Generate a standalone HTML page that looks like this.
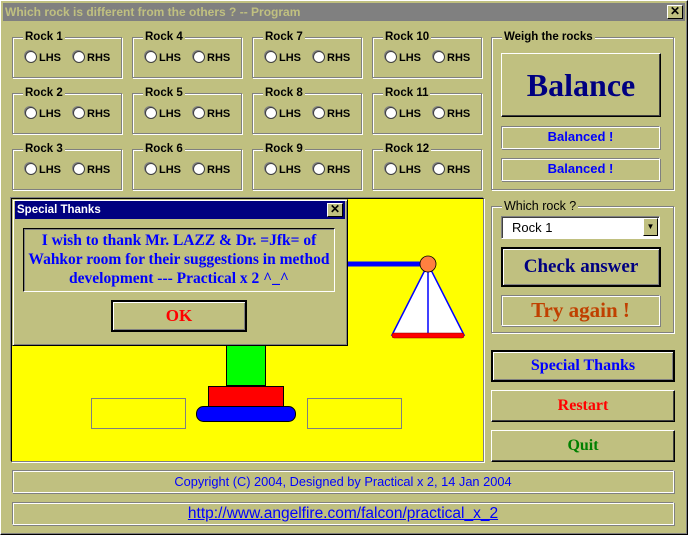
<!DOCTYPE html>
<html><head><style>
*{margin:0;padding:0;box-sizing:border-box}
body{width:688px;height:535px;background:#c0c080;position:relative;overflow:hidden;font-family:"Liberation Sans",sans-serif}
.a{position:absolute}
.win{left:0;top:0;width:688px;height:535px;border:1px solid;border-color:#fff #000 #000 #fff;box-shadow:inset -1px -1px #808080}
.grp{position:absolute;border:1px solid #808080;box-shadow:1px 1px 0 #fff,inset 1px 1px 0 #fff}
.gl{position:absolute;top:-8px;left:10px;background:#c0c080;padding:0 2px;font-size:11.5px;font-weight:bold;color:#000;line-height:14px}
.rad{position:absolute;top:20px;font-size:11px;font-weight:bold;line-height:12px}
.rad i{display:inline-block;width:12px;height:12px;border-radius:50%;background:#fff;border:1px solid #404040;vertical-align:-2px;margin-right:2px;box-shadow:-1px -1px 0 #808080}
.sunk{position:absolute;border:1px solid;border-color:#808080 #fff #fff #808080;box-shadow:inset 1px 1px 0 #fff,1px 1px 0 #808080}
.btn{position:absolute;border:1px solid;border-color:#fff #000 #000 #fff;box-shadow:inset -1px -1px 0 #404040;display:flex;align-items:center;justify-content:center;font-family:"Liberation Serif",serif;font-weight:bold}
.btnd{border:2px solid #000;box-shadow:inset 1px 1px 0 #fff,inset -1px -1px 0 #808080}
.xb{position:absolute;width:16px;height:14px;background:#c0c080;border:1px solid;border-color:#fff #000 #000 #fff;font-size:12px;font-weight:bold;line-height:11px;text-align:center}
</style></head><body>
<div class="a win"></div>
<div class="a" style="left:3px;top:3px;width:682px;height:18px;background:#808080"></div>
<div class="a" style="left:5px;top:4px;font-size:12px;font-weight:bold;color:#c0c080;line-height:16px">Which rock is different from the others ? -- Program</div>
<div class="xb" style="left:667px;top:5px">✕</div>

<div id="rocks"></div>

<div class="grp" style="left:491px;top:37px;width:183px;height:153px"><span class="gl">Weigh the rocks</span></div>
<div class="btn" style="left:501px;top:53px;width:160px;height:64px;color:#000080;font-size:32px">Balance</div>
<div class="sunk" style="left:501px;top:126px;width:159px;height:23px;color:#0000ff;font-size:13px;font-weight:bold;text-align:center;line-height:20px">Balanced !</div>
<div class="sunk" style="left:501px;top:158px;width:159px;height:23px;color:#0000ff;font-size:13px;font-weight:bold;text-align:center;line-height:20px">Balanced !</div>

<div class="grp" style="left:491px;top:206px;width:183px;height:127px"><span class="gl" style="font-weight:normal;font-size:12.5px">Which rock ?</span></div>
<div class="a" style="left:501px;top:216px;width:159px;height:23px;background:#fff;border:1px solid;border-color:#808080 #fff #fff #808080;box-shadow:inset 1px 1px #404040;font-size:13px;line-height:21px;padding-left:10px">Rock 1</div>
<div class="a" style="left:643px;top:218px;width:15px;height:18px;background:#c0c080;border:1px solid;border-color:#fff #000 #000 #fff;font-size:8px;text-align:center;line-height:16px">▼</div>
<div class="btn btnd" style="left:501px;top:247px;width:160px;height:40px;color:#000080;font-size:19px">Check answer</div>
<div class="sunk" style="left:501px;top:295px;width:159px;height:31px;color:#c04000;font-size:21px;font-family:'Liberation Serif',serif;font-weight:bold;text-align:center;line-height:28px">Try again !</div>

<div class="btn btnd" style="left:491px;top:350px;width:184px;height:32px;color:#0000ff;font-size:16px">Special Thanks</div>
<div class="btn" style="left:491px;top:390px;width:184px;height:32px;color:#ff0000;font-size:16px">Restart</div>
<div class="btn" style="left:491px;top:430px;width:184px;height:32px;color:#008000;font-size:16px">Quit</div>

<div class="a" style="left:11px;top:198px;width:473px;height:264px;background:#ff0;border:1px solid;border-color:#000 #808080 #808080 #000;box-shadow:1px 1px 0 #fff,-1px -1px 0 #808080"></div>
<svg class="a" style="left:0;top:0" width="688" height="535">
<line x1="340" y1="264" x2="428" y2="264" stroke="#0000ff" stroke-width="5"/>
<polygon points="428,264 392,335 464,335" fill="#fff" stroke="#0000ff" stroke-width="1.5"/>
<line x1="428" y1="264" x2="428" y2="333" stroke="#0000ff" stroke-width="1.5"/>
<rect x="392" y="333" width="72" height="5" rx="2" fill="#f00" stroke="#800" stroke-width="0.5"/>
<circle cx="428" cy="264" r="8" fill="#ff8040" stroke="#000" stroke-width="0.8"/>
<rect x="226.5" y="344.5" width="39" height="41" fill="#0f0" stroke="#000"/>
<rect x="208.5" y="386.5" width="75" height="20" fill="#f00" stroke="#000"/>
<rect x="196.5" y="406.5" width="99" height="15" rx="7" fill="#00f" stroke="#000"/>
<rect x="91.5" y="398.5" width="94" height="30" fill="none" stroke="#808080"/>
<rect x="307.5" y="398.5" width="94" height="30" fill="none" stroke="#808080"/>
</svg>

<div class="a" style="left:12px;top:199px;width:336px;height:147px;background:#c0c080;border:1px solid;border-color:#c0c080 #000 #000 #c0c080;box-shadow:inset 1px 1px #fff,inset -1px -1px #808080"></div>
<div class="a" style="left:15px;top:201px;width:330px;height:18px;background:#000080;color:#fff;font-size:11.5px;font-weight:bold;line-height:18px;padding-left:2px">Special Thanks</div>
<div class="xb" style="left:327px;top:203px">✕</div>
<div class="a" style="left:23px;top:228px;width:312px;height:64px;border:1px solid;border-color:#000 #fff #fff #000;box-shadow:inset 1px 1px #808080;color:#0000ff;font-family:'Liberation Serif',serif;font-weight:bold;font-size:15.5px;line-height:19px;text-align:center;padding-top:2px;white-space:nowrap">I wish to thank Mr. LAZZ &amp; Dr. =Jfk= of<br>Wahkor room for their suggestions in method<br>development --- Practical x 2 ^_^</div>
<div class="btn btnd" style="left:111px;top:300px;width:136px;height:32px;color:#f00;font-size:17px">OK</div>

<div class="sunk" style="left:12px;top:470px;width:662px;height:23px;color:#0000ff;font-size:12.8px;text-align:center;line-height:21px">Copyright (C) 2004, Designed by Practical x 2, 14 Jan 2004</div>
<div class="sunk" style="left:12px;top:502px;width:662px;height:23px;color:#0000ff;font-size:15.5px;text-decoration:underline;text-align:center;line-height:21px">http://www.angelfire.com/falcon/practical_x_2</div>

<script>
var h='';var xs=[12,132,252,372],ys=[37,93,149];
for(var c=0;c<4;c++)for(var r=0;r<3;r++){var n=c*3+r+1;
h+='<div class="grp" style="left:'+xs[c]+'px;top:'+ys[r]+'px;width:110px;height:41px"><span class="gl">Rock '+n+'</span><span class="rad" style="left:12px;top:13px"><i></i>LHS</span><span class="rad" style="left:60px;top:13px"><i></i>RHS</span></div>';}
document.getElementById('rocks').innerHTML=h;
</script>
</body></html>
